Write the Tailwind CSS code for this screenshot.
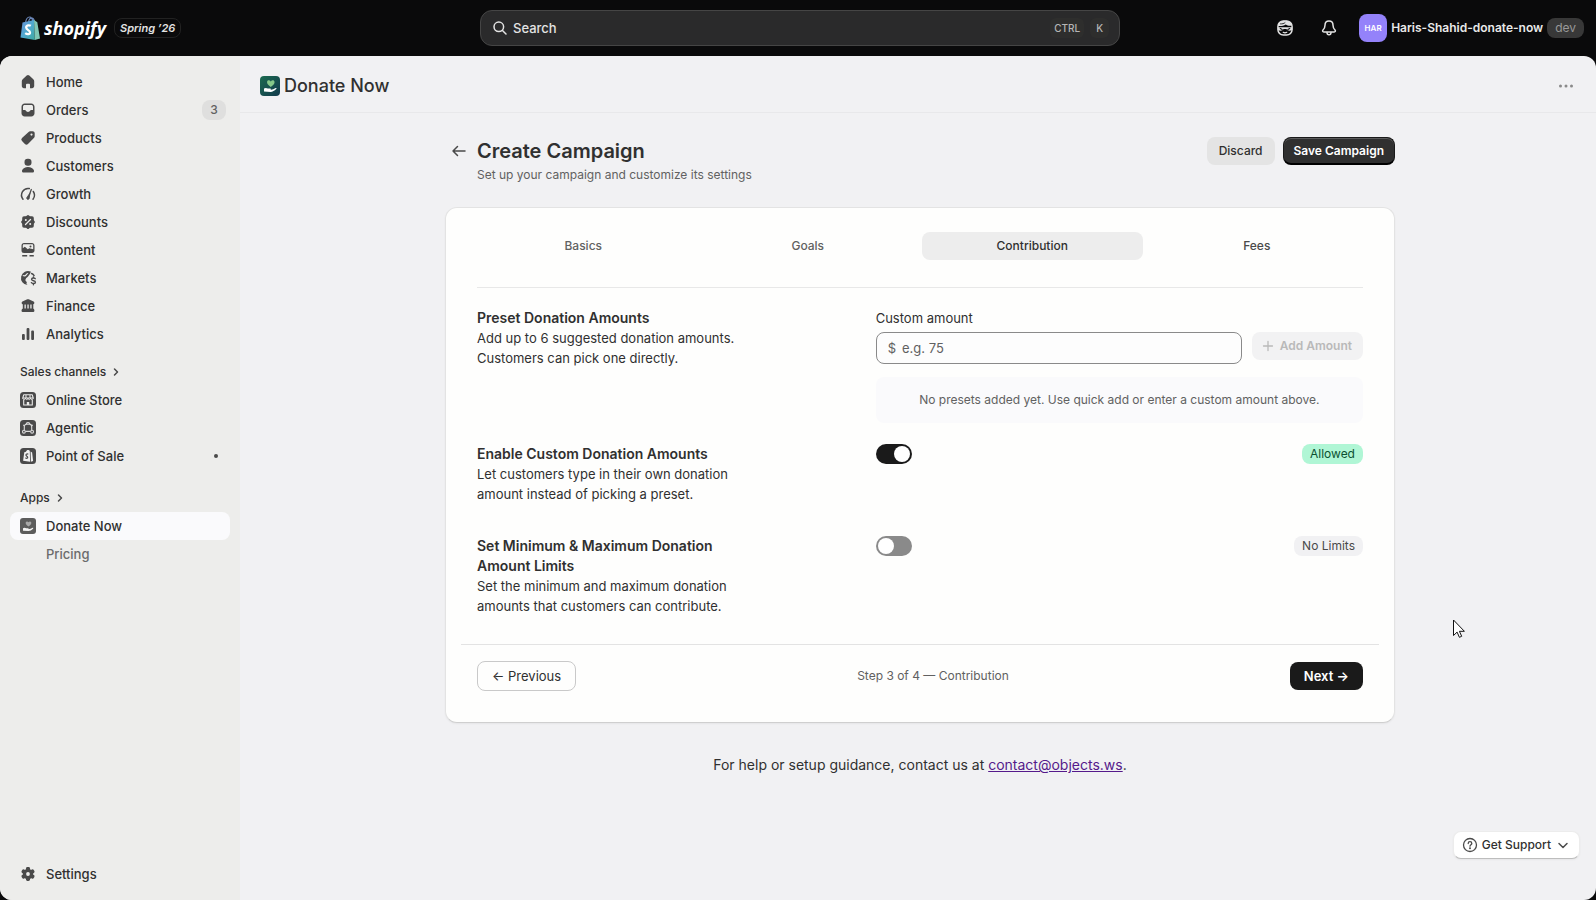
<!DOCTYPE html>
<html lang="en">
<head>
  <meta charset="UTF-8">
  <meta name="viewport" content="width=device-width, initial-scale=1">
  <title>Donate Now - Create Campaign</title>
  <script src="https://cdn.jsdelivr.net/npm/@tailwindcss/browser@4"></script>
</head>
<body class="bg-[#0a0a0b] font-['Inter',sans-serif] text-[13px] leading-5 text-[#303030] h-screen flex flex-col overflow-hidden">

  <!-- Top bar -->
  <header class="h-14 shrink-0 grid grid-cols-[1fr_640px_1fr] items-center pl-4 pr-3">
    <div class="flex items-center gap-2 pl-1">
      <a href="#" class="flex items-center gap-1 text-white">
        <svg class="w-5 h-6" viewBox="0 0 20 24">
          <defs>
            <linearGradient id="bag" x1="0" y1="0" x2="1" y2="1">
              <stop offset="0" stop-color="#6a8fd6"/>
              <stop offset=".5" stop-color="#4fa9cf"/>
              <stop offset="1" stop-color="#3fa9a0"/>
            </linearGradient>
          </defs>
          <path d="M5.500 7C6 3 8 1 9.700 1s2.600 1.500 3 4.500M8.500 6C9 3.500 10.500 2 12 2.200s2 1.500 2.200 3" fill="none" stroke="#6a86b8" stroke-width="1.200"/>
          <path d="M2.500 6.500 14 4l.8 20L.5 21.500z" fill="url(#bag)"/>
          <path d="M14 4l3.300 2.200L20 22.500 14.800 24z" fill="#7fc6b4"/>
          <path d="M10.800 9.800C9.500 9 6.200 9 6.200 11.600c0 2.600 3.800 2.400 3.800 4.800 0 2.200-3 2.100-4.800.7" fill="none" stroke="#fff" stroke-width="2.300"/>
        </svg>
        <span class="font-['Open_Sans',sans-serif] font-bold italic text-[18px] leading-6">shopify</span>
      </a>
      <span class="h-5 px-[5px] rounded-lg border border-[#222] text-[11px] leading-[18px] font-semibold italic text-[#e3e3e3]">Spring ’26</span>
    </div>

    <label class="h-9 flex items-center gap-1.5 pl-3 pr-2.5 rounded-xl border border-[#454545] bg-[#2a2a2b]">
      <svg class="w-[14px] h-[14px] shrink-0" viewBox="0 0 14 14" fill="none" stroke="#e3e3e3" stroke-width="1.500" stroke-linecap="round"><circle cx="5.800" cy="5.800" r="4.800"/><path d="m9.500 9.500 3.500 3.500"/></svg>
      <input type="search" aria-label="Search" placeholder="Search" class="flex-1 min-w-0 bg-transparent outline-none text-[13px] font-medium placeholder:text-[#e3e3e3]">
      <kbd class="h-5 px-1 rounded-md bg-[#2e2e2d] font-['Inter',sans-serif] text-[10px] leading-5 font-medium text-[#b5b5b5]">CTRL</kbd>
      <kbd class="h-5 px-1.5 rounded-md bg-[#2e2e2d] font-['Inter',sans-serif] text-[10px] leading-5 font-medium text-[#b5b5b5]">K</kbd>
    </label>

    <div class="flex items-center justify-end">
      <button aria-label="Sidekick" class="mr-6">
        <svg class="w-5 h-5" viewBox="0 0 20 20">
          <rect x="2.900" y="2.900" width="14.200" height="14.200" rx="5.500" fill="none" stroke="#e3e3e3" stroke-width="1.500"/>
          <path d="M3 8c0-3.500 2.500-5.200 7-5.200S17 4.500 17 7.600c-2.500.5-4.600.1-6.300-1.200C8.700 7.800 6 8.300 3 8z" fill="#e3e3e3"/>
          <path d="M5.500 5.900c1.800.1 3.500-.3 4.500-1.200" fill="none" stroke="#0a0a0b" stroke-width=".8" stroke-linecap="round"/>
          <path d="M3 9.300h14v2.500c-1.500 1.500-4.500 1.300-5.600-.7H8.600C7.500 13.100 4.500 13.300 3 11.800z" fill="#e3e3e3"/>
          <path d="M5.200 10.600 7.200 11.400M14.800 10.600l-2 .8" stroke="#0a0a0b" stroke-width="1.100" stroke-linecap="round"/>
          <path d="M8.200 14.300c1.100.6 2.500.6 3.600 0" fill="none" stroke="#e3e3e3" stroke-width="1.200" stroke-linecap="round"/>
        </svg>
      </button>
      <button aria-label="Notifications" class="mr-5">
        <svg class="w-5 h-5" viewBox="0 0 20 20" fill="none" stroke="#e3e3e3" stroke-width="1.500" stroke-linecap="round" stroke-linejoin="round"><path d="M10 3C7.500 3 6 4.800 6 7.200c0 2.500-.6 3.400-2 4.800-.8.900-.4 2 .8 2h10.400c1.200 0 1.600-1.100.8-2-1.400-1.400-2-2.300-2-4.800C14 4.800 12.500 3 10 3z"/><path d="M8 14.500c0 1.500.8 2.300 2 2.300s2-.8 2-2.300"/></svg>
      </button>
      <button class="flex items-center gap-1">
        <span class="w-7 h-7 rounded-lg bg-[#9482fa] text-white text-[8px] leading-7 font-semibold">HAR</span>
        <span class="text-[12px] font-semibold text-[#e9e9e9]">Haris-Shahid-donate-now</span>
        <span class="h-5 px-2 rounded-lg bg-[#383838] text-[12px] text-[#999]">dev</span>
      </button>
    </div>
  </header>

  <div class="flex-1 min-h-0 flex rounded-xl overflow-hidden bg-[#f1f1f3]">

    <!-- Sidebar -->
    <nav class="w-60 shrink-0 bg-[#ededeb] flex flex-col justify-between pt-3 pb-3 px-2.5 font-medium">
      <div>
        <ul>
          <li><a href="#" class="h-7 flex items-center gap-2 px-2">
            <svg class="w-5 h-5" viewBox="0 0 20 20" fill="#4a4a4a"><path d="M8.700 3.600a2 2 0 0 1 2.600 0l4 3.600c.6.500.9 1.200.9 2v4.900c0 1.200-.9 2.100-2.100 2.100H12v-3.500a1 1 0 0 0-1-1H9a1 1 0 0 0-1 1v3.500H5.900c-1.200 0-2.100-.9-2.100-2.100V9.200c0-.8.300-1.500.9-2z"/></svg>
            Home</a></li>
          <li><a href="#" class="h-7 flex items-center gap-2 pl-2 pr-1">
            <svg class="w-5 h-5" viewBox="0 0 20 20" fill="#4a4a4a" fill-rule="evenodd"><path d="M6.700 3.500h6.600c1.800 0 3.200 1.400 3.200 3.200v6.600c0 1.800-1.400 3.200-3.200 3.200H6.700c-1.800 0-3.200-1.400-3.200-3.200V6.700c0-1.800 1.400-3.200 3.200-3.200zM6.700 5C5.700 5 5 5.700 5 6.700V10h1.800c.5 0 .8.200 1 .6.400.9 1.100 1.400 2.200 1.400s1.800-.5 2.200-1.400c.2-.4.500-.6 1-.6H15V6.700c0-1-.7-1.700-1.700-1.700z"/></svg>
            <span class="flex-1">Orders</span>
            <span class="w-6 h-5 rounded-lg bg-[#dfdfde] text-center text-[12px] text-[#616161]">3</span></a></li>
          <li><a href="#" class="h-7 flex items-center gap-2 px-2">
            <svg class="w-5 h-5" viewBox="0 0 20 20" fill="#4a4a4a" fill-rule="evenodd"><path d="M10.600 3.900c.4-.4.900-.6 1.500-.6h2.600c1.100 0 2 .9 2 2v2.900c0 .6-.2 1.100-.6 1.500L10 15.900a2.200 2.200 0 0 1-3.100 0l-2.900-2.900a2.200 2.200 0 0 1 0-3.100zM13.500 5.500a1.100 1.100 0 1 0 0 2.200 1.100 1.100 0 0 0 0-2.200z"/></svg>
            Products</a></li>
          <li><a href="#" class="h-7 flex items-center gap-2 px-2">
            <svg class="w-5 h-5" viewBox="0 0 20 20" fill="#4a4a4a"><rect x="6.500" y="2.800" width="7" height="7" rx="3.200"/><path d="M4 14.500c.8-2.200 3.200-3.400 6-3.400s5.200 1.200 6 3.400c.4 1.100-.5 2.100-1.600 2.100H5.600c-1.100 0-2-1-1.600-2.100z"/></svg>
            Customers</a></li>
          <li><a href="#" class="h-7 flex items-center gap-2 px-2">
            <svg class="w-5 h-5" viewBox="0 0 20 20" fill="none" stroke="#4a4a4a" stroke-width="1.500" stroke-linecap="round"><path d="M5 15.200A6.600 6.600 0 0 1 11.300 4.600M15 15.200a6.600 6.600 0 0 0 .3-7.700"/><path d="M13.300 5.500 10.200 14" stroke-width="1.300"/><path d="M11.800 9.800 11.200 14.600a1.300 1.300 0 0 1-2.500-.6z" fill="#4a4a4a" stroke-width=".8"/></svg>
            Growth</a></li>
          <li><a href="#" class="h-7 flex items-center gap-2 px-2">
            <svg class="w-5 h-5" viewBox="0 0 20 20"><g fill="#4a4a4a"><rect x="4.200" y="4.200" width="11.600" height="11.600" rx="1.800"/><rect x="4.700" y="4.700" width="10.600" height="10.600" rx="1.500" transform="rotate(45 10 10)"/></g><path d="m7.500 12.500 5-5" stroke="#ededeb" stroke-width="1.300" stroke-linecap="round"/><circle cx="7.800" cy="8" r="1" fill="#ededeb"/><circle cx="12.200" cy="12" r="1" fill="#ededeb"/></svg>
            Discounts</a></li>
          <li><a href="#" class="h-7 flex items-center gap-2 px-2">
            <svg class="w-5 h-5" viewBox="0 0 20 20" fill="#4a4a4a"><path fill-rule="evenodd" d="M6 3h8c1.400 0 2.500 1.100 2.500 2.500v5c0 1.400-1.100 2.500-2.500 2.500H6a2.500 2.500 0 0 1-2.500-2.500v-5C3.500 4.100 4.600 3 6 3zm0 1.300c-.7 0-1.200.5-1.200 1.200v2.700l2-1.500 3 2.600 1.500-1 3.900 1V5.500c0-.7-.5-1.200-1.200-1.200z"/><circle cx="12.500" cy="6.500" r="1"/><path d="M4.200 15h5v1.500h-5zM11.500 15h4.300v1.500h-4.300z"/></svg>
            Content</a></li>
          <li><a href="#" class="h-7 flex items-center gap-2 px-2">
            <svg class="w-5 h-5" viewBox="0 0 20 20"><path d="M12.800 3.600A7 7 0 1 0 9.600 17c-1.500-1.200-1.300-2.200-.6-3.100-1.500-.6-1.900-1.900-1.300-3 .8-1.400 1.700-1.400 2.500-2.600.8-1.300 2.400-2.300 2.600-4.700z" fill="#4a4a4a"/><path d="M4.800 7.500c1.300.6 2.600.5 3.300-.6.500-.9 1.300-1.300 2-1.400" stroke="#ededeb" stroke-width="1.200" fill="none"/><path d="M17.200 10.700c-.7-1-3.500-1-3.600.7-.1 1.800 3.800.9 3.800 2.800 0 1.700-3.200 1.700-4 .5M15.400 9v1M15.400 15.700v1.100M13.600 5.500c1.100.5 2 1.200 2.500 2.100" stroke="#4a4a4a" stroke-width="1.400" fill="none" stroke-linecap="round"/></svg>
            Markets</a></li>
          <li><a href="#" class="h-7 flex items-center gap-2 px-2">
            <svg class="w-5 h-5" viewBox="0 0 20 20" fill="#4a4a4a"><path d="M9.300 3.300c.5-.2.900-.2 1.400 0l4.900 2.300c1.300.7.900 2.900-.6 2.900H5c-1.500 0-1.900-2.200-.6-2.900zM4.800 8h1.700v5H4.800zM7.800 8h1.600v5H7.800zM10.700 8h1.600v5h-1.600zM13.600 8h1.700v5h-1.700zM4.800 12.600h10.400c1.400.5 1.700 3.400.3 3.400h-11c-1.400 0-1.100-2.900.3-3.400z"/></svg>
            Finance</a></li>
          <li><a href="#" class="h-7 flex items-center gap-2 px-2">
            <svg class="w-5 h-5" viewBox="0 0 20 20" fill="#4a4a4a"><rect x="4" y="10" width="2.800" height="6" rx="1"/><rect x="8.600" y="4" width="2.800" height="12" rx="1"/><rect x="13.200" y="6.500" width="2.800" height="9.500" rx="1"/></svg>
            Analytics</a></li>
        </ul>

        <button class="mt-2.5 h-7 px-2.5 flex items-center gap-1 text-[12px]">Sales channels
          <svg class="w-3 h-3" viewBox="0 0 12 12" fill="none" stroke="#4a4a4a" stroke-width="1.500" stroke-linecap="round" stroke-linejoin="round"><path d="m4.500 3 3 3-3 3"/></svg>
        </button>
        <ul>
          <li><a href="#" class="h-7 flex items-center gap-2 px-2">
            <svg class="w-5 h-5" viewBox="0 0 20 20"><rect x="2" y="2" width="16" height="16" rx="3.500" fill="#4a4a4a"/><path d="M5.700 4.800h8.600l.9 3.200H4.800zM5.700 10v5h8.600v-5" fill="none" stroke="#ededeb" stroke-width="1.100" stroke-linejoin="round"/><path d="M4.800 8c0 2.100 2.600 2.100 2.600 0 0 2.100 2.600 2.100 2.600 0 0 2.100 2.600 2.100 2.600 0 0 2.100 2.600 2.100 2.600 0M8 5v3M12 5v3" fill="none" stroke="#ededeb" stroke-width="1"/><path d="M8.800 12h2.400v3H8.800z" fill="#ededeb"/></svg>
            Online Store</a></li>
          <li><a href="#" class="h-7 flex items-center gap-2 px-2">
            <svg class="w-5 h-5" viewBox="0 0 20 20"><rect x="2" y="2" width="16" height="16" rx="3.500" fill="#4a4a4a"/><g fill="none" stroke="#dcdcdc" stroke-width="1.100"><path d="M6.300 12.300V8.700c0-1.500 1-2.600 2.500-2.600h2.400c1.500 0 2.500 1.100 2.500 2.600v3.600M7.500 13.400h5"/><path d="M8.300 6c0-2 3.400-2 3.400 0M6.300 7.800l-1-1M13.700 7.800l1-1"/><circle cx="5.900" cy="13.700" r="1.400"/><circle cx="14.100" cy="13.700" r="1.400"/></g></svg>
            Agentic</a></li>
          <li><a href="#" class="h-7 flex items-center gap-2 pl-2 pr-3">
            <svg class="w-5 h-5" viewBox="0 0 20 20"><rect x="2" y="2" width="16" height="16" rx="3.500" fill="#4a4a4a"/><path d="M6.300 6.200 8 5.700C8.400 4.200 9.600 3.700 10.600 4l1.200.8.300 11-7-1zM12.600 5.500l1.500.9 1 8.500-2.200.9z" fill="#f1f1f1"/><path d="M10.300 8.200c-1-.5-2.300-.2-2.300.9 0 1.200 1.700 1.100 1.700 2.300 0 1.100-1.400 1.100-2.300.4" fill="none" stroke="#4a4a4a" stroke-width="1.200"/></svg>
            <span class="flex-1">Point of Sale</span>
            <span class="w-1 h-1 rounded-full bg-[#4a4a4a]"></span></a></li>
        </ul>

        <button class="mt-3.5 h-7 px-2.5 flex items-center gap-1 text-[12px]">Apps
          <svg class="w-3 h-3" viewBox="0 0 12 12" fill="none" stroke="#4a4a4a" stroke-width="1.500" stroke-linecap="round" stroke-linejoin="round"><path d="m4.500 3 3 3-3 3"/></svg>
        </button>
        <ul>
          <li><a href="#" class="h-7 flex items-center gap-2 px-2 rounded-lg bg-[#fafafc]">
            <svg class="w-5 h-5" viewBox="0 0 20 20"><rect x="2" y="2" width="16" height="16" rx="3" fill="#5c5c5c"/><path d="M10.500 10.500C8.500 9 7.400 7.800 7.700 6.500s2-1.500 2.800-.2c.8-1.300 2.500-1.100 2.800.2s-.8 2.500-2.800 4z" fill="#a8a8a8"/><path d="M5 12.200c1.200-.9 2.200-.6 3.200 0h1.900c.8.100.7 1 0 1.100l2.500-.5 2-1c.7-.1.900.5.400.9-1.500 1.300-2.800 2.300-4.500 2.300L5 14.700z" fill="#f4f4f4"/></svg>
            Donate Now</a></li>
          <li><a href="#" class="h-7 flex items-center pl-9 text-[#6b6b6b]">Pricing</a></li>
        </ul>
      </div>

      <a href="#" class="h-7 flex items-center gap-2 px-2">
        <svg class="w-5 h-5" viewBox="0 0 20 20"><g fill="#4a4a4a"><circle cx="10" cy="10" r="5.200"/><rect x="8" y="3" width="4" height="14" rx="1.400"/><rect x="8" y="3" width="4" height="14" rx="1.400" transform="rotate(60 10 10)"/><rect x="8" y="3" width="4" height="14" rx="1.400" transform="rotate(120 10 10)"/></g><circle cx="10" cy="10" r="1.900" fill="#ededeb"/></svg>
        Settings</a>
    </nav>

    <div class="flex-1 min-w-0 relative flex flex-col">
      <!-- App title bar -->
      <div class="h-[57px] shrink-0 flex items-center justify-between pt-1 pl-5 pr-5 border-b border-[#e8e8ea]">
        <div class="flex items-center gap-1">
          <svg class="w-5 h-5" viewBox="0 0 20 20">
            <defs><linearGradient id="app" x1="0" y1="0" x2="1" y2="1"><stop offset="0" stop-color="#1c6b50"/><stop offset="1" stop-color="#123a4c"/></linearGradient></defs>
            <rect width="20" height="20" rx="4" fill="url(#app)"/>
            <path d="M10.800 11C8 9 6.700 7.500 7.100 5.800s2.600-2 3.700-.3c1.100-1.700 3.300-1.400 3.700.3s-.9 3.200-3.700 5.200z" fill="#86c98a"/>
            <path d="M4 12.500c1.400-1 2.700-.6 3.800 0h2.400c1 .2.900 1.300 0 1.400l3-.6 2.500-1.300c.9-.1 1.100.6.500 1.100-1.900 1.700-3.500 2.900-5.600 2.900L4 15.600z" fill="#fff"/>
          </svg>
          <span class="text-[18px] font-medium">Donate Now</span>
        </div>
        <button aria-label="More actions">
          <svg class="w-5 h-5" viewBox="0 0 20 20" fill="#8a8a8a"><circle cx="4.500" cy="10" r="1.500"/><circle cx="10" cy="10" r="1.500"/><circle cx="15.500" cy="10" r="1.500"/></svg>
        </button>
      </div>

      <main class="flex-1 min-h-0 overflow-hidden pt-6 pl-1">
        <div class="w-full max-w-[950px] mx-auto">
          <div class="flex items-start justify-between">
            <div class="flex gap-2 pl-1">
              <a href="#" aria-label="Back" class="h-7 flex items-center">
                <svg class="w-5 h-5" viewBox="0 0 20 20" fill="none" stroke="#4a4a4a" stroke-width="1.500" stroke-linecap="round" stroke-linejoin="round"><path d="M16 10H4M8.500 5.500 4 10l4.500 4.500"/></svg>
              </a>
              <div>
                <h1 class="text-[20px] leading-7 font-semibold">Create Campaign</h1>
                <p class="text-[12px] text-[#616161]">Set up your campaign and customize its settings</p>
              </div>
            </div>
            <div class="flex gap-2 text-[12px]">
              <button class="h-7 px-3 rounded-lg bg-[#e4e4e4] font-medium">Discard</button>
              <button class="h-7 px-2.5 rounded-lg bg-[#303030] text-white font-semibold border border-[#1a1a1a] border-b-2 border-b-black shadow-[inset_0_1px_0_#5a5a5a]">Save Campaign</button>
            </div>
          </div>

          <form class="mt-[22px] rounded-xl bg-[#fefefd] border border-[#e3e3e3] border-b-[#cfcfcf] shadow-xs pt-6 pb-[31px] px-[31px]" onsubmit="return false">
            <div role="tablist" class="-mx-1 grid grid-cols-4 gap-1 text-[12px] font-medium text-[#616161]">
              <button type="button" role="tab" class="h-7 rounded-lg">Basics</button>
              <button type="button" role="tab" class="h-7 rounded-lg">Goals</button>
              <button type="button" role="tab" aria-selected="true" class="h-7 rounded-lg bg-[#ededed] text-[#303030]">Contribution</button>
              <button type="button" role="tab" class="h-7 rounded-lg text-[#4a4a4a]">Fees</button>
            </div>

            <div class="mt-[27px] pt-5 border-t border-[#e8e8e8] grid grid-cols-[45fr_55fr] gap-y-5">
              <div class="max-w-[280px]">
                <h2 class="text-[14px] leading-5 font-semibold">Preset Donation Amounts</h2>
                <p>Add up to 6 suggested donation amounts. Customers can pick one directly.</p>
              </div>
              <div>
                <label for="amount" class="block">Custom amount</label>
                <div class="mt-1 flex items-start gap-2.5">
                  <div class="flex-1 h-8 flex items-center gap-1.5 px-[11px] rounded-lg border border-[#8a8a8a] bg-[#fdfdfd] text-[#616161]">
                    <span>$</span>
                    <input id="amount" type="text" placeholder="e.g. 75" class="flex-1 min-w-0 bg-transparent outline-none placeholder:text-[#616161]">
                  </div>
                  <button type="button" disabled class="h-7 pl-2 pr-[11px] flex items-center gap-1 rounded-lg bg-[#f2f2f3] text-[12px] font-semibold text-[#b9b9b9]">
                    <svg class="w-4 h-4" viewBox="0 0 16 16" fill="none" stroke="#b9b9b9" stroke-width="1.300" stroke-linecap="round"><path d="M8 3.500v9M3.500 8h9"/></svg>
                    Add Amount
                  </button>
                </div>
                <p class="mt-[13px] mb-px py-[13px] rounded-lg bg-[#fafafc] text-center text-[12px] text-[#616161]">No presets added yet. Use quick add or enter a custom amount above.</p>
              </div>

              <div class="max-w-[280px] pb-3">
                <label for="custom" class="block text-[14px] leading-5 font-semibold">Enable Custom Donation Amounts</label>
                <p>Let customers type in their own donation amount instead of picking a preset.</p>
              </div>
              <div class="flex items-start justify-between">
                <input id="custom" type="checkbox" checked class="appearance-none w-9 h-5 p-0.5 rounded-full bg-[#8a8a8a] checked:bg-[#1a1a1a] flex checked:justify-end before:w-4 before:h-4 before:rounded-full before:bg-white">
                <span class="h-5 px-2 rounded-lg bg-[#b0f6d5] text-[12px] text-[#0c5132]">Allowed</span>
              </div>

              <div class="max-w-[280px]">
                <label for="limits" class="block text-[14px] leading-5 font-semibold">Set Minimum &amp; Maximum Donation Amount Limits</label>
                <p>Set the minimum and maximum donation amounts that customers can contribute.</p>
              </div>
              <div class="flex items-start justify-between">
                <input id="limits" type="checkbox" class="appearance-none w-9 h-5 p-0.5 rounded-full bg-[#8a8a8a] checked:bg-[#1a1a1a] flex checked:justify-end before:w-4 before:h-4 before:rounded-full before:bg-white">
                <span class="h-5 px-2 rounded-lg bg-[#f1f1f3] text-[12px] text-[#4a4a4a]">No Limits</span>
              </div>
            </div>

            <div class="-mx-4 mt-7 px-4 pt-4 border-t border-[#e3e3e3] flex items-center justify-between">
              <button type="button" class="h-[30px] px-[14px] rounded-lg border border-[#c9c9c9]">← Previous</button>
              <span class="text-[12px] text-[#616161]">Step 3 of 4 — Contribution</span>
              <button type="button" class="h-7 px-[14px] rounded-lg bg-[#1a1a1a] text-white font-semibold">Next →</button>
            </div>
          </form>

          <p class="mt-8 text-center text-[14px]">For help or setup guidance, contact us at <a href="mailto:contact@objects.ws" class="underline text-[#551a8b]">contact@objects.ws</a>.</p>
        </div>
      </main>

      <button class="absolute right-4 bottom-[41px] h-7 px-2 flex items-center gap-1 rounded-lg bg-white text-[12px] font-medium border border-[#ececec] border-b-[#bdbdbd] shadow-xs">
        <svg class="w-4 h-4" viewBox="0 0 16 16" fill="none" stroke="#4a4a4a" stroke-width="1.300" stroke-linecap="round"><circle cx="8" cy="8" r="6.500"/><path d="M6.200 6.500C6.200 5.300 7 4.700 8 4.700s1.800.7 1.800 1.700C9.800 7.700 8 7.700 8 9.200"/><circle cx="8" cy="11.300" r=".4" fill="#4a4a4a"/></svg>
        Get Support
        <svg class="w-4 h-4" viewBox="0 0 16 16" fill="none" stroke="#4a4a4a" stroke-width="1.500" stroke-linecap="round" stroke-linejoin="round"><path d="m4 6.500 4 4 4-4"/></svg>
      </button>
    </div>
  </div>

  <!-- Pointer -->
  <svg class="absolute left-[1453px] top-[619px] w-3 h-[19px]" viewBox="0 0 12 19" fill="#fff" stroke="#111" stroke-width="1"><path d="M.5 1v15.500l3.600-3.400 2.300 5.200 2.300-1-2.300-5h5z"/></svg>
</body>
</html>
